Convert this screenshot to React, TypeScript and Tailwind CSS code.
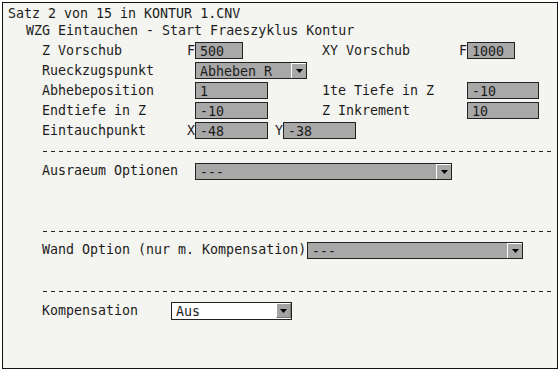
const mono = { fontFamily: '"DejaVu Sans Mono", "Liberation Mono", monospace' };

function Arrow({ light }: { light?: boolean }) {
  return (
    <div className={`flex h-[15px] w-[15px] items-center justify-center border-l border-t border-l-white border-t-white ${light ? "border-b border-r border-b-[#777] border-r-[#777] bg-[#a4a4a4]" : "bg-[#a8a8a8]"}`}>
      <svg width="7" height="4" viewBox="0 0 7 4">
        <polygon points="0,0 7,0 3.5,4" fill="#000" />
      </svg>
    </div>
  );
}

function Field({ value, className }: { value: string; className: string }) {
  return (
    <div className={`mt-[1px] h-[17px] shrink-0 border border-[#222] bg-[#a8a8a8] pl-[4px] leading-[18px] ${className}`}>{value}</div>
  );
}

function Select({ value, className, white }: { value: string; className: string; white?: boolean }) {
  return (
    <div className={`flex shrink-0 border border-[#222] ${white ? "bg-white" : "bg-[#a8a8a8]"} ${className}`}>
      <div className="flex-1 pl-[4px] leading-[18px]">{value}</div>
      <Arrow light={white} />
    </div>
  );
}

function Dashes({ className }: { className: string }) {
  return (
    <div className={`ml-[40px] h-[1px] w-[509px] bg-[repeating-linear-gradient(90deg,#222_0_4px,transparent_4px_8px)] ${className}`} />
  );
}

export default function App() {
  return (
    <div className="h-[372px] w-[560px] bg-white p-[2px] text-[13.3px] text-[#1c1c1c]" style={mono}>
      <div className="h-[367px] w-[556px] border border-[#111] bg-[#f4f4f0] pt-[1px]">
        <div className="h-[17px] pl-[5px] leading-[20px]">Satz 2 von 15 in KONTUR 1.CNV</div>
        <div className="h-[20px] pl-[23px] leading-[20px]">WZG Eintauchen - Start Fraeszyklus Kontur</div>

        <div className="grid grid-cols-[145px_8px_127px_137px_8px_auto] grid-rows-[20px_20px_20px_20px_20px] items-start pl-[39px] leading-[20px]">
          <div>Z Vorschub</div>
          <div>F</div>
          <div><Field value="500" className="w-[48px]" /></div>
          <div>XY Vorschub</div>
          <div>F</div>
          <div><Field value="1000" className="w-[48px]" /></div>

          <div>Rueckzugspunkt</div>
          <div />
          <div className="pt-[1px]"><Select value="Abheben R" className="h-[17px] w-[112px]" /></div>
          <div />
          <div />
          <div />

          <div>Abhebeposition</div>
          <div />
          <div><Field value="1" className="w-[73px]" /></div>
          <div>1te Tiefe in Z</div>
          <div />
          <div><Field value="-10" className="w-[72px]" /></div>

          <div>Endtiefe in Z</div>
          <div />
          <div><Field value="-10" className="w-[73px]" /></div>
          <div>Z Inkrement</div>
          <div />
          <div><Field value="10" className="w-[72px]" /></div>

          <div>Eintauchpunkt</div>
          <div>X</div>
          <div className="flex items-start">
            <Field value="-48" className="w-[73px]" />
            <div className="ml-[7px] w-[8px] shrink-0">Y</div>
            <Field value="-38" className="w-[73px]" />
          </div>
          <div />
          <div />
          <div />
        </div>

        <Dashes className="mt-[10px]" />
        <div className="mt-[9px] flex h-[20px] items-start pl-[39px] leading-[20px]">
          <div className="w-[153px]">Ausraeum Optionen</div>
          <Select value="---" className="mt-[2px] h-[17px] w-[257px]" />
        </div>

        <Dashes className="mt-[50px]" />
        <div className="mt-[8px] flex h-[20px] items-start pl-[39px] leading-[20px]">
          <div className="w-[265px]">Wand Option (nur m. Kompensation)</div>
          <Select value="---" className="mt-[2px] h-[17px] w-[216px]" />
        </div>

        <Dashes className="mt-[31px]" />
        <div className="mt-[9px] flex h-[20px] items-start pl-[39px] leading-[20px]">
          <div className="w-[129px]">Kompensation</div>
          <Select value="Aus" white className="mt-[1px] h-[18px] w-[121px]" />
        </div>
      </div>
    </div>
  );
}
